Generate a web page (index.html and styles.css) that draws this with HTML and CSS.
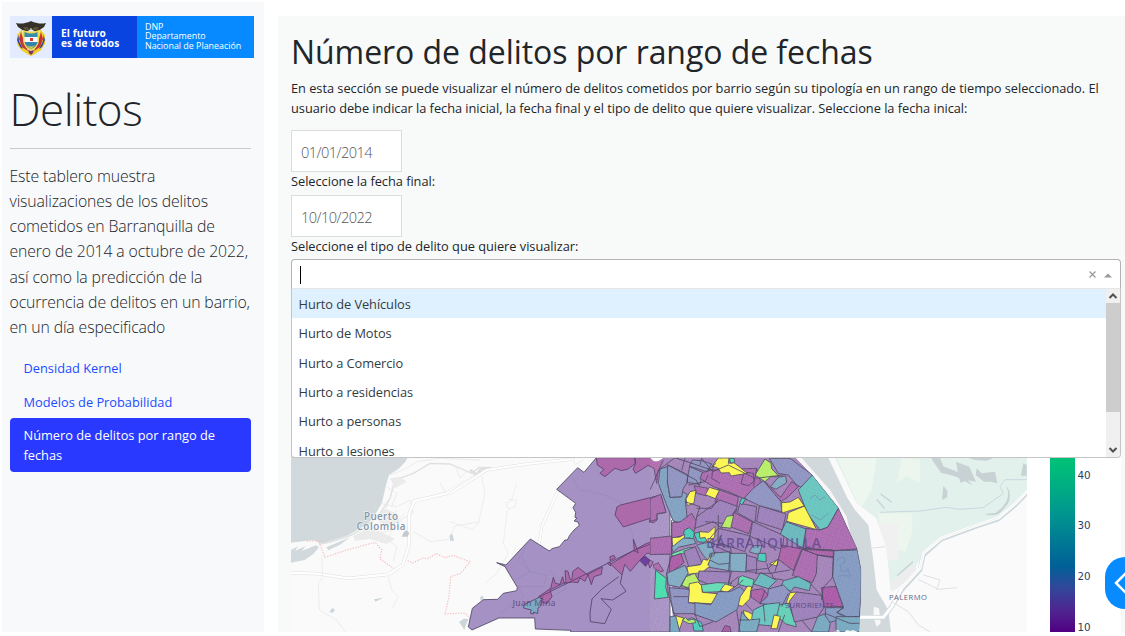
FILE: index.html
```html
<!DOCTYPE html>
<html lang="es">
<head>
<meta charset="utf-8">
<title>Delitos</title>
<link rel="stylesheet" href="styles.css">
</head>
<body>
<div class="app">
  <aside class="sidebar">
    <div class="brand">
      <div class="brand-crest">
        <svg viewBox="0 0 42 42" width="42" height="42">
          <path d="M12 13 7 19l0 9 4 6 6 4 4 2 4-2 6-4 4-6 0-9-5-6-2 16-7 8-7-8z" fill="#f0cf2c"/>
          <path d="M11 16 9 23l3 8 6 4-4-9zM31 16l2 7-3 8-6 4 4-9z" fill="#c8323a"/>
          <path d="M8.500 19 7 24l3 7 3 2-4-8zM33.500 19l1.500 5-3 7-3 2 4-8z" fill="#31469c"/>
          <path d="M6 7q5 1 9 0l4-1 2-1 2 1 4 1q4 1 9 0l-2 4-6 4-4 0-3-3-3 3-4 0-6-4z" fill="#343128"/>
          <path d="M13 11h4l4 3 4-3h4l-2 3H15z" fill="#5f5130"/>
          <path d="M13 14q8 3 16 0v11q-1 7-8 10-7-3-8-10z" fill="#eed84f"/>
          <path d="M14.500 16q7 3 13 0v5h-13z" fill="#368cad"/>
          <path d="M14.500 21h13v5h-13z" fill="#fff"/><path d="M20 22h3v3h-3z" fill="#df3135"/>
          <path d="M14.500 26h13q-1 5-6.500 7-5-2-6.500-7z" fill="#3184ad"/>
          <path d="M16 29q5 3 10 0l-5 4z" fill="#d7c84a"/>
          <path d="m18 34 3 1 3-1-1 3-2 2-2-2z" fill="#7d3566"/>
        </svg>
      </div>
      <div class="brand-motto">El futuro<br>es de todos</div>
      <div class="brand-dept">DNP<br>Departamento<br>Nacional de Planeación</div>
    </div>
    <h2 class="side-title">Delitos</h2>
    <hr class="side-rule">
    <p class="lead">Este tablero muestra<br>visualizaciones de los delitos<br>cometidos en Barranquilla de<br>enero de 2014 a octubre de 2022,<br>así como la predicción de la<br>ocurrencia de delitos en un barrio,<br>en un día especificado</p>
    <nav class="nav">
      <a class="nav-link">Densidad Kernel</a>
      <a class="nav-link">Modelos de Probabilidad</a>
      <a class="nav-link active">Número de delitos por rango de<br>fechas</a>
    </nav>
  </aside>
  <main class="main">
    <h1 class="title">Número de delitos por rango de fechas</h1>
    <p class="intro">En esta sección se puede visualizar el número de delitos cometidos por barrio según su tipología en un rango de tiempo seleccionado. El<br>usuario debe indicar la fecha inicial, la fecha final y el tipo de delito que quiere visualizar. Seleccione la fecha inical:</p>
    <div class="date">01/01/2014</div>
    <div class="label">Seleccione la fecha final:</div>
    <div class="date">10/10/2022</div>
    <div class="label label-type">Seleccione el tipo de delito que quiere visualizar:</div>
    <div class="select">
      <div class="control">
        <span class="caret"></span>
        <svg class="control-icons" viewBox="0 0 28 10" width="28" height="10"><path d="M1.500 2.500l6 6m0-6-6 6" stroke="#999" stroke-width="1.200"/><path d="M16 8.500 20 4.500l4 4z" fill="#999"/></svg>
      </div>
      <div class="menu">
        <div class="options">
          <div class="option focused">Hurto de Vehículos</div>
          <div class="option">Hurto de Motos</div>
          <div class="option">Hurto a Comercio</div>
          <div class="option">Hurto a residencias</div>
          <div class="option">Hurto a personas</div>
          <div class="option">Hurto a lesiones</div>
        </div>
        <div class="scrollbar">
          <svg viewBox="0 0 14 14" width="14" height="14"><path d="m3.500 9 3.500-3.500L10.500 9" fill="none" stroke="#505050" stroke-width="2"/></svg>
          <div class="thumb"></div>
          <svg viewBox="0 0 14 14" width="14" height="14"><path d="m3.500 5 3.500 3.500L10.500 5" fill="none" stroke="#505050" stroke-width="2"/></svg>
        </div>
      </div>
    </div>
    <svg class="graph" viewBox="291 289 830 343" width="830" height="343">
      <defs>
        <linearGradient id="scale" x1="0" y1="0" x2="0" y2="1">
          <stop offset="0" stop-color="#00c278"/><stop offset=".08" stop-color="#00b97b"/><stop offset=".33" stop-color="#009490"/><stop offset=".62" stop-color="#006097"/><stop offset=".74" stop-color="#30489a"/><stop offset=".88" stop-color="#4f2490"/><stop offset="1" stop-color="#500082"/>
        </linearGradient>
        <clipPath id="mapclip"><rect x="291" y="289" width="736" height="343"/></clipPath>
        <clipPath id="cityclip"><path d="M0 0H415L487 75 566 174 622 297 634 360 633 440 628 546H0z"/></clipPath>
        <pattern id="streets" width="17" height="13" patternUnits="userSpaceOnUse" patternTransform="rotate(18)"><path d="M0 3H17M0 9H17M4 0V13M13 0V9" stroke="#fff" stroke-opacity=".13" stroke-width="1.500" fill="none"/></pattern>
      </defs>
      <rect x="291" y="289" width="830" height="343" fill="#fff"/>
      <g clip-path="url(#mapclip)">
        <rect x="291" y="289" width="736" height="343" fill="#fafafa"/>

        <!-- Caribbean coast -->
        <g transform="translate(280 450) scale(.33333)" fill="none">
          <path d="M33 0H392L378 33 358 55 327 75 318 105 306 158 285 195 265 220 205 256 125 281 100 270 33 278z" fill="#d2d9dc"/>
          <path d="M33 300 55 288 45 302 78 288 65 303 108 286 117 292 100 312 74 330 33 338zM139 292 210 262 180 284 145 301z" fill="#d2d9dc"/>
          <path d="M117 283 150 276 213 256 260 230 300 190 330 145 345 90 400 70 450 40 510 42 575 70 600 50" stroke="#dfe0e0" stroke-width="4"/>
          <path d="M330 75 380 55 410 35 480 25 600 30M320 110 350 130 335 170M345 90 330 145 310 195M500 130 480 100M530 55 540 85 560 65M300 160 350 170 390 150 400 190 360 210 380 240M265 220 290 250 340 240 330 210 350 180" stroke="#e3e4e4" stroke-width="2"/>
          <path d="m220 258 45-25 38 12 42 22-25 15-50-15-45 5zM330 85l30-5 20 15-35 20zM310 175l40 15 10 25-40 15-25-15z" fill="#ebebeb"/>
          <path d="M33 369 110 371 205 385 325 373 368 345 386 290 388 190 403 153 500 130 600 70" stroke="#dedfe0" stroke-width="10"/>
          <path d="M33 369 110 371 205 385 325 373 368 345 386 290 388 190 403 153 500 130 600 70" stroke="#fff" stroke-width="7"/>
          <path d="M400 245 450 275 505 268 525 228 600 215M125 320 128 380 115 400 118 480 170 510 195 546M325 380 335 420 355 440 335 478M375 190 340 225 325 270 350 290 340 335" stroke="#e4e5e6" stroke-width="2"/>
          <path d="m80 273 35-1 20 50 65-22 85-23 20 22-5 28 42 28M383 332l15 7 30-15 15 2 27-15 25 12 25-7 50 20-28 34-30 10-5 60-12 52 60-3 20 22" stroke="#f4bfc3" stroke-width="3.500" stroke-dasharray="4 4"/>
          <path d="m509 262 8-12 5 22-5 2zM282 448l28-5-24 12zM148 486l9-12 8 6-7 8zM538 516l14-10 14 2-8 14-6 14-3-10z" fill="#cbd5da"/>
          <path d="m372 245 8-4 8 8-5 11h-18z" fill="#c7c9cc"/>
        </g>

        <!-- Magdalena river and eastern bank -->
        <g transform="translate(860 440) scale(.33333)" fill="none">
          <path d="M-500 0-160 0-90 54-25 200 25 350 50 576H-500z" fill="#f7f7f7"/>
          <path d="M-75 54H501V150L420 235 243 298 180 360 140 420 92 465 80 330 48 235-10 190-75 54z" fill="#e2f1eb"/>
          <path d="M-70 54H50L35 150 0 210-12 180z" fill="#eef6f0"/>
          <path d="m125 54 55 5 0 70-40-20-30 20zM55 220h102v55l-20 60-75-20z" fill="#ecf5ee"/>
          <path d="M30 250H115V360H62z" fill="#f0f0f0"/>
          <path d="M501 150 420 235 243 298 180 360 140 420 60 470 100 576H501z" fill="#fafafa"/>
          <path d="M-10 190 48 235 78 320 92 455 60 462 30 340z" fill="#fafafa"/>
          <path d="M-230 0-95 54-40 170-15 210 25 255 40 360 50 450 85 510 93 576H0L0 420-12 360-40 230-90 150-175 54z" fill="#d2d9dc"/>
          <path d="m42 500 15 5 5 45-12 10-10-30z" fill="#f8f8f8"/>
          <path d="m215 54 25 0 10 25 50 20 40 38-55-28-42-11-26-37zM250 137l12 15 0 20-16 8zM288 65l40 15 20 45-30-5-16 10-8-30zM350 85l15 15 40-5 7 35-20-5-20 0-25-20zM490 70l10 5v32h-17z" fill="#c8d2d5"/>
          <path d="m325 54h75l-20 8-35-2zM438 137q12 22 2 46l-14 20-20 16-33 3q30 10 50-6l20-24q16-30-5-55z" fill="#c8d2d5"/>
          <path d="M60 217 180 213 260 202 300 208 370 203 430 160 420 140 435 119H501" stroke="#ccd6df" stroke-width="3"/>
          <path d="m50 178 24 28M62 162l33 25M111 407l48-42" stroke="#c9d0d8" stroke-width="4"/>
          <path d="m112 411 48-38 15 20-60 50-22 12 0-30z" fill="#ededee"/>
          <path d="M501 158 465 195 415 237 340 262 243 298 190 345 180 390 125 450 95 500 70 532 0 532" stroke="#ced8dc" stroke-width="14"/>
          <path d="M501 155 465 192 415 234 340 259 243 295 190 340 180 385 125 445 95 500 70 532-200 532" stroke="#fff" stroke-width="9"/>
          <path d="M501 155 465 192 415 234 340 259 243 295 190 340 180 385 125 445" stroke="#dedede" stroke-width="1.500"/>
          <path d="m95 485 50 30 30 40 35 21M190 405l50 15-10 30M175 418l60 30 55-5M30 325l45-5" stroke="#dfe0e1" stroke-width="3"/>
        </g>

        <!-- western districts -->
        <g transform="translate(450 450) scale(.33333)" fill="none">
          <path d="M0 130 110 60 230 42 365 28M60 60 80 75 95 55 125 55M325 120 275 230 265 300" stroke="#dfe0e1" stroke-width="9"/>
          <path d="M0 130 110 60 230 42 365 28M325 120 275 230 265 300" stroke="#fff" stroke-width="6"/>
          <path d="M95 75 105 130 85 220 65 238 0 215M200 100 185 150 168 160 175 178 195 170 200 150 175 148M172 180 160 280 175 310 140 370 105 400M370 20 375 45 400 30" stroke="#e6e7e8" stroke-width="2"/>
          <path d="m0 252 10 16-10 6zM90 440l10-2v12l-8 2zM28 516l15-10 10 2-5 14-5 18z" fill="#cbd5da"/>
          <path d="M370 0H660V546H362L362 541 256 537 254 504 147 504 66 540 55 531 67 475 100 449 143 448 160 430 200 422 202 412 165 350 140 338 168 345 241 267 293 300 300 303 305 296 328 290 345 270 352 270 359 256 372 240 388 226 384 216 372 213 381 204 375 202 377 187 369 173 377 160 320 118 383 53 402 67 439 23 415 0z" fill="#a591c3" stroke="#4d4665" stroke-width="2.500"/>
          <path d="M365 80 390 120 450 130 510 155 520 205 545 245 555 290M215 320 240 365 290 375 280 410 205 410 220 440 150 490M240 270 205 330 240 365 195 390M300 360 350 415 290 450 240 455" stroke="#9789b9" stroke-width="2"/>
          <g stroke="#593f6a" stroke-width="2.500">
            <path fill="#ad6aab" d="M439 23H553L556 40 535 57 515 62 495 55 465 80 450 70 462 58 442 45zM555 23H660V60L625 60 620 100 612 55 594 46 557 70 549 57 557 40z"/>
            <path fill="#ad6aab" d="M501 171 512 165 632 135 648 187 620 193 622 209 612 218 598 216 600 205 520 231 495 195z"/>
            <path fill="#ad6aab" d="M553 300 590 280 660 262V312L590 310 565 336 541 364 524 343 516 375 482 342z"/>
            <path fill="#ad6aab" d="M415 372 405 394 390 384 384 398 367 396 340 400 300 420 306 440 290 461 275 456 278 442 270 450 266 440 302 415 310 382 316 400 330 403 338 380 342 398 348 398 345 362 354 364 360 388 366 388 368 365 384 352 412 374z"/>
            <path fill="#ad6aab" d="m415 372 42-21-3 22-22 7-8 24-8-24zM550 268l15 40-12-5zM480 320l12-4 4 8-16 8zM472 340l8-4 2 12zM590 326l20 10-10 18zM610 345l15-7 16 25-8 2-20-9z"/>
            <path fill="#6c41a0" d="m576 324 10-5 14 12-13 18-17-17z"/>
            <path fill="#7babc2" d="m222 464 48-23 6 12-4 15-8 6-1 17-12-5 0 6-10-2 3-10-23-6z"/>
            <path d="m516 375-5 25 17 24-40 26-35-4 31 32-20 43-43-6-1-26 6-42 30-30 50-37"/>
            <path d="M270 440 550 302 612 278 660 268"/>
          </g>
        </g>

        <!-- urban neighbourhoods -->
        <g transform="translate(650 450) scale(.33333)" clip-path="url(#cityclip)">
          <path fill="#a181b7" d="M42 0H415L487 75 566 174 622 297 634 360 633 440 628 546H70L65 410 50 370 65 290 70 215 30 110 25 80z"/>
          <path fill="#fff" d="M0 23H40L25 34 12 34z"/>
          <g stroke="#4a4360" stroke-width="2.500" stroke-linejoin="round">
            <path fill="#7e9fbf" d="M30 57 53 50 60 80 52 93 60 142 92 141 97 125 112 133 106 152 112 210 85 217 69 212 48 160 25 100z"/>
            <path fill="#8c91bf" d="M53 45 90 62 113 75 112 97 100 115 95 140 60 142 52 93zM119 50 158 67 150 103 110 97zM128 30 155 32 185 42 170 65 118 48z"/>
            <path fill="#a868ad" d="M0 147 32 133 48 187 21 191 20 209 0 214zM0 265 65 258 65 312 0 314zM185 60 320 55 332 95 290 150 240 127 190 110 150 85 158 67z"/>
            <path fill="#a868ad" d="M65 218 90 216 125 190 140 215 132 245 105 255 65 265zM132 107 175 115 170 138 140 130z"/>
            <path fill="#a868ad" d="M205 118 265 140 258 187 195 155zM340 90 392 142 425 95 445 110 415 140 395 154 365 130zM281 73 290 67 310 70 312 95 295 107 273 101z"/>
            <path fill="#9a7db8" d="M140 200 210 150 263 170 250 190 215 235 190 215 135 235zM270 160 320 170 315 218 262 188zM328 167 408 192 397 240 320 215z"/>
            <path fill="#8c91bf" d="M340 92 393 155 395 185 328 167 282 145 310 115zM358 25H420L487 75 472 120 440 105 415 75 385 70z"/>
            <path fill="#7ea9c1" d="m385 82 22-4 3 20-32 20-17-8z"/>
            <path fill="#65c3bd" d="M487 75 566 174 533 232 510 240 472 190 445 120z"/>
            <path fill="#a868ad" d="M566 174 622 297 548 302 460 295 468 235 510 240 533 232z"/>
            <path fill="#fbf64c" d="M205 24H237L235 40 252 38 292 70 243 78 238 68 213 69 205 55 187 48z"/>
            <path fill="#46dcac" d="m238 25 15 0 1 12-12 3z"/>
            <path fill="#b5ed62" d="M345 27 363 39 365 56 388 80 362 80 345 95 315 75z"/>
            <path fill="#fbf64c" d="m178 112 30 9-12 25-30-12zM120 125l18-4-6 38-20 8-4-20zM395 158l25-2 25-14 18 26-63 20-5-4zM463 168l37 71-90-25 5-26z"/>
            <path fill="#a868ad" d="m252 187 55 29-10 35-60-22z"/>
            <path fill="#b5ed62" d="m230 199 21-3-9 39-28-4z"/>
            <path fill="#46cbb7" d="m275 145 13 0-12 20-7-7z"/>
            <path fill="#9a7db8" d="m308 215 94 42-5 42-97-40zM205 235l95 22-16 48-80-28zM185 281l57 10 2 20-58-5z"/>
            <path fill="#65b6bb" d="m408 215 60 22-10 58-67-43z"/>
            <path fill="#aa5fa6" d="m395 285 60 12-25 65-45-34zM460 298l90 5v20l-50-8z"/>
            <path fill="#a868ad" d="m457 298 45 17-3 56-12 27-60-22z"/>
            <path fill="#46cbb7" d="m103 240 15-7 15 14-3 30-10-14-22 5zM132 250l22-5 23 22-15 10-20-2z"/>
            <path fill="#fbf64c" d="m66 263 24-2 14-8-1 25-35 14zM148 245l28 2 20-18-2 32-20 17-9-16-15 3z"/>
            <path fill="#7ea9c1" d="m100 264 30 2 9 14-54 12-15 15-5-15z"/>
            <path fill="#64e5a2" d="m65 311 50-18 17 0-3 10-62 16z"/>
            <path fill="#9a7db8" d="m101 304 35-14 21 52-40 9z"/>
            <path fill="#a858a3" d="m60 322 33-12 9 28-45 34z"/>
            <path fill="#7ea9c1" d="m140 285 42-10 12 38-22 17-13-15zM180 310l60-5 0 58-66-12zM240 310l50 0-2 56-52-3zM308 287l28 0-8 27-30-8z"/>
            <path fill="#46cbb7" d="m325 310 23 0 0 26-25-4z"/>
            <path fill="#fbf64c" d="m111 350 41-6 8-17 12 4 15-21-13 34 5 5-24 19-42 5zM358 342l26-14-2 20z"/>
            <path fill="#9a7db8" d="m147 363 94 3-6 37-52 3-39-16zM290 316l30 8 0 43-32-2z"/>
            <path fill="#7ea9c1" d="m50 370 55-24 10 22-25 44-35-7z"/>
            <path fill="#b5ed62" d="m108 380 26-10 14 25-25 18-30-3z"/>
            <path fill="#46dcac" d="m17 361 32 24-2 25 8 32-42 5z"/>
            <path fill="#62d9b2" d="m151 405 50-7 45 2-33 25-54 2zM267 382l10-5 35 12-5 25-43-11z"/>
            <path fill="#fbf64c" d="m118 401 26-5 10 10 3 21 45 4 0 24-20 6-68-3zM225 402l28 8-23 18-19-7z"/>
            <path fill="#8097bf" d="m205 425 35 0 30-15 14 15-24 55-62 36-65-23 0-35 50 6z"/>
            <path fill="#8b91bf" d="m58 413 60 5-3 40 20 3v30l-65 0z"/>
            <path fill="#fbf64c" d="m265 465 6-25 22-32 12 2-6 37-22 22zM280 481l15 5 20 12-7 14-10-1-15-16z"/>
            <path fill="#65b6bb" d="m310 402 22-34 48 23-25 25zM400 392l45-12 38 20-5 22-45-11-10 13-30-14z"/>
            <path fill="#aa5fa6" d="m303 421 35-5 17 20-24 25-28-20z"/>
            <path fill="#8b91bf" d="m355 417 45-12 22 22-7 33-20 12-50-10-15-2 23-22z"/>
            <path fill="#fbf64c" d="m420 428 20-2-8 30-25 7z"/>
            <path fill="#60ceb4" d="m383 466 32-7 22 62 2 10-33-10-26-24z"/>
            <path fill="#65c3bd" d="m310 480 35-17 45-5-7 30-15 40-55-5-8-18z"/>
            <path fill="#9a7db8" d="m440 426 75 10 8 35-20 30-70 15-15-62z"/>
            <path fill="#a856a5" d="m514 413 44-4 22 60-57 2z"/>
            <path fill="#8097bf" d="M552 302 622 300 634 360 633 440 628 500 590 500 562 488 580 470 548 380zM527 473l55 0-22 14 28 17-64 17z"/>
            <path fill="#74a6be" d="m503 500 20-8 18 28-5 26H485zM558 500h75v46h-75zM60 500l20-3 10 50H60zM275 485l20 25 35-3-10 39h-54z"/>
            <path fill="#46cbb7" d="m110 510 15-7 30 15 5 25-28 0-4-22z"/>
            <path fill="#fbf64c" d="m77 497 24 7-13 36zM372 495l19 4-10 37-18 0z"/>
            <path fill="#a856a5" d="m225 527 15 3 3 16h-28z"/>
            <path fill="#b5ed62" d="m97 511 10-9 7 9 18-4 5 11-20 3z"/>
            <g fill="none"><path d="M30 57 75 23 185 60M40 30 0 120M65 210V312L50 370 55 430 75 500M53 45 138 90 150 110M105 24 95 60M170 65 198 40M190 48 185 85 210 100M115 105 165 95 175 75M105 155 150 170 140 200M140 175 185 175 205 145M155 24 150 45M213 24 190 15M320 55 310 110M178 267 205 235 205 195M165 215 220 220M190 280 215 255 200 290 245 310M245 362 235 405M290 362 355 355 384 328M315 370 365 370 370 385 400 390M350 340 360 370 420 360M385 330 375 365M500 315 550 320 547 383 520 413 514 450M455 295 550 300M480 400 515 436M415 430 395 470M345 420 330 462M265 380 240 400M280 390 250 415M70 440 115 440M117 418 95 405M134 491 150 530 190 515M260 480 270 546M340 463 345 515M285 460 305 480M295 510 265 510M404 495 385 546M455 510 485 546M525 490 600 520 628 520M180 330 205 343 237 340M155 25 188 65 235 45 315 85 400 75"/></g>
          </g>
          <path d="M0 20H634V546H0z" fill="url(#streets)"/>
          <path d="m560 330 20-10 5 15-15 10 5 20 20-5 5 20-20-5-15 5M480 145l15-10 15 15 15-10M485 195l25 15 25-20" fill="none" stroke="#718db0" stroke-width="2"/>
          <path d="m553 544 12-5 5 7M583 546l8-6 10 3 8-3 15 6z" fill="#eef3f3"/>
        </g>

        <g class="map-text">
          <text x="364" y="519.500" textLength="34">Puerto</text>
          <text x="356.500" y="530" textLength="49">Colombia</text>
          <text class="place-dark" x="512.500" y="606" textLength="43">Juan Mina</text>
          <text class="place-city" x="706" y="547.500" textLength="115">BARRANQUILLA</text>
          <text class="place-small inner" x="785" y="608" textLength="49">SURORIENTE</text>
          <text class="place-small" x="889" y="600" textLength="38">PALERMO</text>
        </g>
      </g>
      <rect x="1050" y="458" width="25" height="174" fill="url(#scale)"/>
      <g class="ticks"><text x="1077.500" y="479">40</text><text x="1077.500" y="529">30</text><text x="1077.500" y="580">20</text><text x="1077.500" y="631">10</text></g>
    </svg>
    <div class="fab"><svg viewBox="0 0 20 52" width="20" height="52"><path d="M24 13 11 26l13 13" fill="none" stroke="#fff" stroke-width="2.500"/></svg></div>
  </main>
</div>
</body>
</html>
```
FILE: styles.css
```css
* { box-sizing: border-box; }
body { margin: 0; background: #fff; font-family: "Open Sans", "Noto Sans", sans-serif; font-size: 12.8px; color: #212529; overflow: hidden; }
.app { display: flex; gap: 14px; width: 1125px; height: 632px; padding: 2px 0 0 2px; }
.sidebar { width: 262px; height: 630px; flex: none; padding: 14px 10px 0 7.500px; background: #f8f9fb; }
.brand { display: flex; width: 244px; height: 42px; color: #fff; white-space: nowrap; }
.brand-crest { width: 42px; background: #e2ebff; }
.brand-motto { width: 85px; padding: 12px 0 0 9.500px; background: #0943e0; font-size: 10.200px; line-height: 10px; font-weight: 700; letter-spacing: .08px; }
.brand-dept { width: 117px; padding: 6px 0 0 8.500px; background: #078aff; font-size: 8.900px; line-height: 9.4px; }
.side-title { margin: 21px 0 0; font-size: 44px; line-height: 60px; font-weight: 300; height: 69px; letter-spacing: -.5px; }
.side-rule { width: 241px; height: 1px; margin: 0; border: 0; background: #c9cbcd; }
.lead { margin: 15px 0 0; font-size: 15.8px; line-height: 25.15px; font-weight: 300; letter-spacing: -.12px; white-space: nowrap; }
.nav { display: flex; flex-direction: column; width: 241px; margin-top: 11.500px; }
.nav-link { padding: 6.700px 14px; line-height: 20px; color: #1c4bff; white-space: nowrap; }
.nav-link.active { background: #2a39ff; color: #fff; border-radius: 4px; }
.main { position: relative; flex: 1; height: 616px; margin-top: 14px; padding: 15px 4px 0 13px; background: #f8faf9; }
.title { margin: 0; font-size: 32px; line-height: 42px; height: 47px; font-weight: 400; letter-spacing: -.06px; white-space: nowrap; }
.intro { margin: 0 0 12px; line-height: 20px; letter-spacing: -.03px; white-space: nowrap; }
.date { width: 111px; height: 42px; padding: 1px 9px 0; border: 1px solid #dbdddd; background: #fff; color: #555; font-size: 14.600px; line-height: 40px; font-weight: 300; letter-spacing: -.55px; }
.label { height: 23px; line-height: 18px; letter-spacing: -.03px; white-space: nowrap; }
.label-type { height: 22px; }
.select { position: relative; width: 830px; height: 30px; }
.control { display: flex; align-items: center; justify-content: space-between; height: 30px; padding: 0 4px 0 8px; border: 1px solid #b3b3b3; border-bottom-color: #e6e6e6; border-radius: 4px 4px 0 0; background: #fff; }
.control-icons { display: block; }
.caret { width: 1px; height: 18px; margin-top: 2px; background: #000; }
.menu { position: absolute; top: 30px; left: 0; display: flex; width: 830px; height: 169px; border: 1px solid #c4c4c4; border-top: 0; border-radius: 0 0 4px 4px; background: #fff; overflow: hidden; }
.options { flex: 1; }
.option { height: 29.350px; padding-left: 6.500px; line-height: 30px; letter-spacing: -.06px; color: #333b43; }
.option.focused { background: #dff1fe; }
.scrollbar { display: flex; flex-direction: column; width: 14px; background: #f0f0f0; }
.thumb { height: 109px; margin-bottom: 31px; background: #cdcdcd; }
.graph { display: block; }
.map-text { font-family: "Open Sans", sans-serif; font-size: 9.800px; font-weight: 600; fill: #8496aa; stroke: #fff; stroke-width: 1.500px; stroke-opacity: .6; paint-order: stroke; }
.place-dark { font-size: 8.500px; fill: #5a4a83; fill-opacity: .8; stroke: none; }
.place-city { font-size: 14px; fill: #57418b; fill-opacity: .7; stroke: none; }
.place-small { font-size: 7.600px; font-weight: 400; fill: #5c6a85; stroke-width: .5px; }
.place-small.inner { fill: #5a4a83; stroke: none; }
.ticks { font-family: "DejaVu Sans", sans-serif; font-size: 10.300px; fill: #2a3f5f; }
.fab { position: absolute; right: 0; top: 541px; width: 20px; height: 52px; border-radius: 26px 0 0 26px / 26px 0 0 26px; background: #078bff; overflow: hidden; }
```
